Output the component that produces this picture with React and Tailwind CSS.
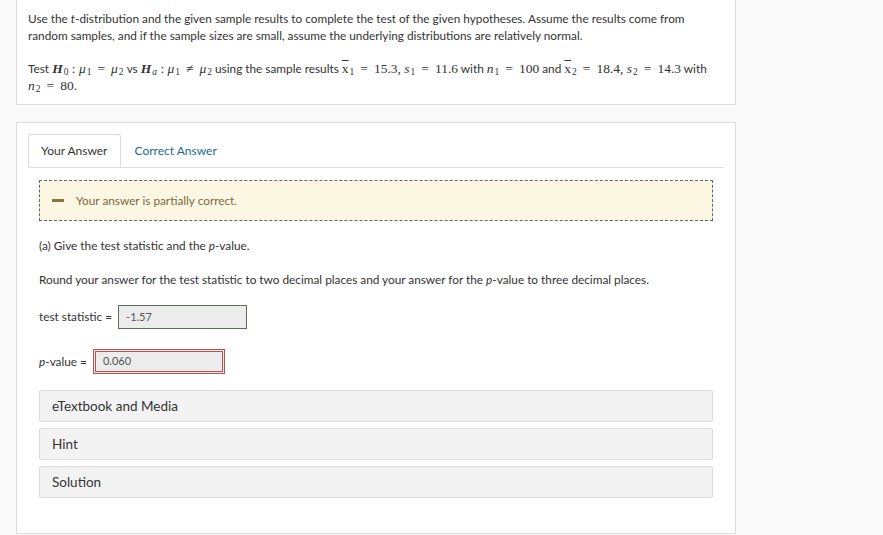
import React from "react";

const M = ({ children, className = "" }) => (
  <span className={`font-['Liberation_Serif',serif] text-[13.5px] ${className}`}>{children}</span>
);
const I = ({ children, b }) => (
  <span className={`italic ${b ? "font-bold" : ""}`}>{children}</span>
);
const Sub = ({ children }) => <sub className="text-[9.5px] ml-[1px]">{children}</sub>;
const Eq = () => <span className="mx-[6px]">=</span>;

export default function App() {
  return (
    <div className="min-h-[535px] bg-[#f9f9f9] font-['Lato',sans-serif] text-[#333] pb-[2px]">
      <div className="ml-[16px] w-[720px] bg-white border-x border-b border-[#ddd] px-[11px] pt-[10px] pb-[10px] text-[11.8px] leading-[17px]">
        <p>
          Use the <i>t</i>-distribution and the given sample results to complete the test of the given hypotheses. Assume the results come from random samples, and if the sample sizes are small, assume the underlying distributions are relatively normal.
        </p>
        <p className="mt-[16px]">
          Test{" "}
          <M>
            <I b>H</I><Sub>0</Sub> : <I>μ</I><Sub>1</Sub><Eq /><I>μ</I><Sub>2</Sub>
          </M>{" "}
          vs{" "}
          <M>
            <I b>H</I><Sub><i>a</i></Sub> : <I>μ</I><Sub>1</Sub><span className="mx-[6px]">≠</span><I>μ</I><Sub>2</Sub>
          </M>{" "}
          using the sample results{" "}
          <M>
            <span className="overline">x</span><Sub>1</Sub><Eq />15.3, <I>s</I><Sub>1</Sub><Eq />11.6
          </M>{" "}
          with{" "}
          <M>
            <I>n</I><Sub>1</Sub><Eq />100
          </M>{" "}
          and{" "}
          <M>
            <span className="overline">x</span><Sub>2</Sub><Eq />18.4, <I>s</I><Sub>2</Sub><Eq />14.3
          </M>{" "}
          with{" "}
          <M>
            <I>n</I><Sub>2</Sub><Eq />80.
          </M>
        </p>
      </div>

      <div className="mt-[17px] ml-[16px] w-[720px] h-[412px] bg-white border border-[#ddd] px-[11px] pt-[11px]">
        <div className="flex border-b border-[#ddd] text-[12px]">
          <div className="h-[33px] px-[12px] flex items-center border border-[#ddd] border-b-0 rounded-t-[3px] bg-white -mb-px text-[#333]">
            Your Answer
          </div>
          <div className="h-[33px] px-[14px] flex items-center text-[#1d6a8c]">Correct Answer</div>
        </div>

        <div className="px-[11px]">
          <div className="mt-[12px] h-[41px] bg-[#fcf7e3] border border-dashed border-[#666] flex items-center pl-[12px] text-[11.8px] text-[#7b6a45]">
            <span className="w-[12px] h-[3px] bg-[#8a7441] mr-[12px]" />
            Your answer is partially correct.
          </div>

          <p className="mt-[16px] text-[11.8px] leading-[17px]">
            (a) Give the test statistic and the <i>p</i>-value.
          </p>
          <p className="mt-[17px] text-[11.8px] leading-[17px]">
            Round your answer for the test statistic to two decimal places and your answer for the <i>p</i>-value to three decimal places.
          </p>

          <div className="mt-[17px] flex items-center text-[11.8px]">
            <span>test statistic =</span>
            <div className="ml-[6px] w-[129px] h-[24px] bg-[#ececec] border border-[#5a6e5a] flex items-center pl-[7px] text-[11px] text-[#555]">
              -1.57
            </div>
          </div>

          <div className="mt-[20px] flex items-center text-[11.8px]">
            <span><i>p</i>-value =</span>
            <div className="ml-[6px] w-[132px] h-[25px] bg-[#ececec] border-[3px] border-double border-[#b5514f] flex items-center pl-[7px] text-[11px] text-[#555]">
              0.060
            </div>
          </div>

          <div className="mt-[16px] flex flex-col gap-[6px]">
            {["eTextbook and Media", "Hint", "Solution"].map((t) => (
              <div
                key={t}
                className="h-[32px] bg-[#f3f3f3] border border-[#ddd] rounded-[2px] flex items-center px-[12px] text-[13.5px] text-[#333]"
              >
                {t}
              </div>
            ))}
          </div>
        </div>
      </div>
    </div>
  );
}
